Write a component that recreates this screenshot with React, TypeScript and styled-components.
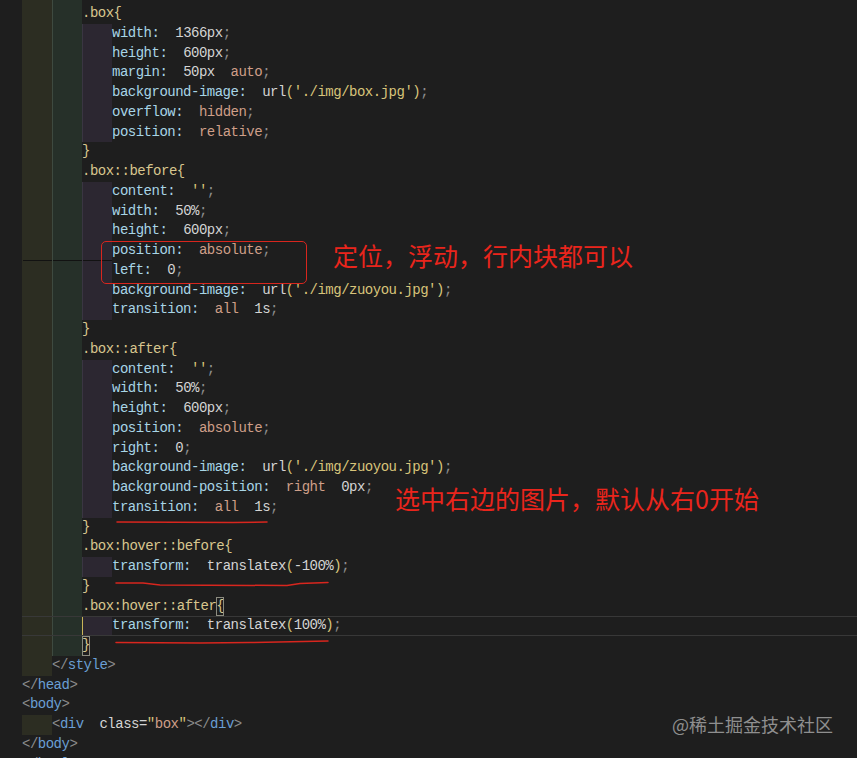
import React from "react"
import styled, { createGlobalStyle } from "styled-components"

const GlobalStyle = createGlobalStyle`
  html, body {
    margin: 0;
    padding: 0;
    background: #1e1e1e;
  }
`

// token colours of the editor theme
const COLORS = {
  sel: "#d8c68e",
  prop: "#a8d5e6",
  num: "#d4d4d4",
  kw: "#cf9f88",
  str: "#d8c47a",
  pun: "#8e8e8e",
  tag: "#6a9fd4",
  brk: "#8a8a8a",
  attr: "#d4d4d4",
}
type K = keyof typeof COLORS

const INDENT_BG = {
  o: "#2c2d22",
  g: "#263029",
  p: "#2c2731",
}
type I = keyof typeof INDENT_BG

const Editor = styled.div`
  position: relative;
  width: 857px;
  height: 758px;
  overflow: hidden;
  background: #1e1e1e;
`

const Code = styled.div`
  display: flex;
  flex-direction: column;
  margin-top: -15.75px;
  font-family: "Liberation Mono", "DejaVu Sans Mono", monospace;
  font-size: 14px;
  letter-spacing: -0.5px;
  white-space: pre;
`

const Row = styled.div<{ $cur?: boolean }>`
  position: relative;
  display: flex;
  height: 19.75px;
  line-height: 19.75px;
  padding-left: 22px;
  box-sizing: border-box;
  ${(p) => p.$cur && `
    &::after {
      content: "";
      position: absolute;
      left: 22px;
      right: 0;
      top: 0;
      bottom: 0;
      border-top: 1px solid #383838;
      border-bottom: 1px solid #383838;
      pointer-events: none;
    }
  `}
`

const Indent = styled.span<{ $kind: I; $rule?: boolean; $scope?: boolean }>`
  flex: none;
  width: 30px;
  height: 100%;
  box-sizing: border-box;
  background: ${(p) => INDENT_BG[p.$kind]};
  border-left: 1px solid
    ${(p) => (p.$scope ? "#c9b458" : p.$kind === "g" ? "#3e4a40" : p.$kind === "p" ? "#3a3642" : "transparent")};
  ${(p) => p.$rule && `box-shadow: inset 0 -1px 0 #121212;`}
`

const Tok = styled.span<{ $k: K }>`
  color: ${(p) => COLORS[p.$k]};
`

const Match = styled.span<{ $scope?: boolean }>`
  color: ${COLORS.sel};
  outline: 1px solid #8c8c80;
  outline-offset: -1px;
  ${(p) => p.$scope && `box-shadow: inset 1px 0 0 #c9b458;`}
`

const Note = styled.div<{ $x: number; $y: number }>`
  position: absolute;
  left: ${(p) => p.$x}px;
  top: ${(p) => p.$y}px;
  font-family: "Noto Sans CJK SC", "Noto Sans", sans-serif;
  font-size: 25px;
  line-height: 25px;
  color: #ea251c;
  white-space: nowrap;
`

const RedBox = styled.div`
  position: absolute;
  left: 101px;
  top: 241px;
  width: 206px;
  height: 43px;
  box-sizing: border-box;
  border: 1.5px solid #d8261e;
  border-radius: 5px;
`

const Marks = styled.svg`
  position: absolute;
  left: 0;
  top: 0;
  pointer-events: none;
`

const Watermark = styled.div`
  position: absolute;
  left: 672px;
  top: 715px;
  font-family: "Noto Sans CJK SC", "Noto Sans", sans-serif;
  font-size: 18px;
  line-height: 18px;
  color: #8f8f8f;
  white-space: nowrap;
`

type Line = {
  ind: I[]
  toks: [K | "match", string][]
  cur?: boolean
  rule?: boolean
  scope?: boolean
}

const BLOCK: I[] = ["o", "g"]
const DECL: I[] = ["o", "g", "p"]

const sel = (s: string): Line => ({ ind: BLOCK, toks: [["sel", s]] })
const decl = (name: string, ...rest: [K, string][]): Line => ({
  ind: DECL,
  toks: [["prop", name + ":"], ["pun", "  "], ...rest, ["pun", ";"]],
})
const url = (path: string): [K, string][] => [["num", "url"], ["str", `('${path}')`]]

const lines: Line[] = [
  { ind: BLOCK, toks: [] },
  sel(".box{"),
  decl("width", ["num", "1366px"]),
  decl("height", ["num", "600px"]),
  decl("margin", ["num", "50px"], ["pun", "  "], ["kw", "auto"]),
  decl("background-image", ...url("./img/box.jpg")),
  decl("overflow", ["kw", "hidden"]),
  decl("position", ["kw", "relative"]),
  sel("}"),
  sel(".box::before{"),
  decl("content", ["str", "''"]),
  decl("width", ["num", "50%"]),
  decl("height", ["num", "600px"]),
  { ...decl("position", ["kw", "absolute"]), rule: true },
  decl("left", ["num", "0"]),
  decl("background-image", ...url("./img/zuoyou.jpg")),
  decl("transition", ["kw", "all"], ["pun", "  "], ["num", "1s"]),
  sel("}"),
  sel(".box::after{"),
  decl("content", ["str", "''"]),
  decl("width", ["num", "50%"]),
  decl("height", ["num", "600px"]),
  decl("position", ["kw", "absolute"]),
  decl("right", ["num", "0"]),
  decl("background-image", ...url("./img/zuoyou.jpg")),
  decl("background-position", ["kw", "right"], ["pun", "  "], ["num", "0px"]),
  decl("transition", ["kw", "all"], ["pun", "  "], ["num", "1s"]),
  sel("}"),
  sel(".box:hover::before{"),
  decl("transform", ["num", "translatex"], ["str", "("], ["num", "-100%"], ["str", ")"]),
  sel("}"),
  { ind: BLOCK, toks: [["sel", ".box:hover::after"], ["match", "{"]] },
  {
    ...decl("transform", ["num", "translatex"], ["str", "("], ["num", "100%"], ["str", ")"]),
    cur: true,
    scope: true,
  },
  { ind: BLOCK, toks: [["match", "}"]], scope: true },
  { ind: ["o"], toks: [["brk", "</"], ["tag", "style"], ["brk", ">"]] },
  { ind: [], toks: [["brk", "</"], ["tag", "head"], ["brk", ">"]] },
  { ind: [], toks: [["brk", "<"], ["tag", "body"], ["brk", ">"]] },
  {
    ind: ["o"],
    toks: [
      ["brk", "<"], ["tag", "div"], ["pun", "  "], ["attr", "class"], ["attr", "="],
      ["str", "\""], ["kw", "box"], ["str", "\""], ["brk", "></"], ["tag", "div"], ["brk", ">"],
    ],
  },
  { ind: [], toks: [["brk", "</"], ["tag", "body"], ["brk", ">"]] },
  { ind: [], toks: [["brk", "</"], ["tag", "html"], ["brk", ">"]] },
]

function App() {
  return (
    <Editor>
      <GlobalStyle />
      <Code>
        {lines.map((line, i) => (
          <Row key={i} $cur={line.cur}>
            {line.ind.map((k, j) => (
              <Indent
                key={j}
                $kind={k}
                $rule={line.rule}
                $scope={line.cur && line.scope && j === line.ind.length - 1}
              />
            ))}
            {line.toks.map(([k, text], j) =>
              k === "match" ? (
                <Match key={j} $scope={line.scope}>{text}</Match>
              ) : (
                <Tok key={j} $k={k}>{text}</Tok>
              )
            )}
          </Row>
        ))}
      </Code>

      {/* annotations drawn on the screenshot */}
      <RedBox />
      <Note $x={333} $y={243}>定位，浮动，行内块都可以</Note>
      <Note $x={395} $y={486}>选中右边的图片，默认从右0开始</Note>
      <Marks width="857" height="758" viewBox="0 0 857 758">
        <g fill="none" stroke="#d8261e" strokeWidth="1.5" strokeLinecap="round">
          <path d="M117 522 L233 522.5 L267 522" />
          <path d="M116 583 L143 583 L160 585 L287 585.5 L300 583.5 L328 582.5" />
          <path d="M116 642.5 L200 643 L250 642.5 L328 641" />
        </g>
      </Marks>

      <Watermark>@稀土掘金技术社区</Watermark>
    </Editor>
  )
}

export default App
